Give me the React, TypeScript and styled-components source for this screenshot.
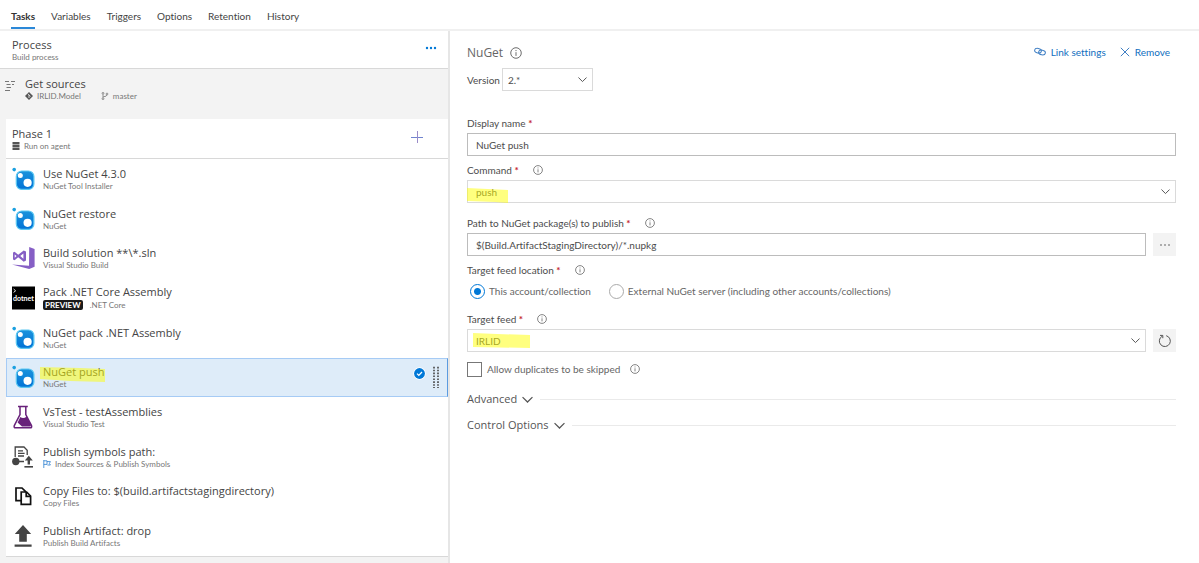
import React from "react";
import styled, { createGlobalStyle, css } from "styled-components";

const headingFont = `"Open Sans", "Noto Sans", sans-serif`;

const GlobalStyle = createGlobalStyle`
  *, *::before, *::after { box-sizing: border-box; }
  body {
    margin: 0;
    background: #fff;
    color: #4c4c4c;
    font-family: Lato, "Open Sans", sans-serif;
    font-size: 10px;
    line-height: 14px;
    font-variant-ligatures: none;
  }
  button, input, select { font: inherit; color: inherit; font-variant-ligatures: none; }
  button { border: 0; padding: 0; background: none; cursor: pointer; }
  svg { display: block; flex: none; }
`;

const Page = styled.div`
  min-height: 100vh;
  display: flex;
  flex-direction: column;
`;

const TabBar = styled.nav`
  display: flex;
  gap: 16px;
  padding: 0 11px;
  height: 31px;
  border-bottom: 2px solid #f0f0f0;
`;

const Tab = styled.a<{ $active?: boolean }>`
  display: flex;
  align-items: center;
  padding-top: 4px;
  color: #444;
  text-decoration: none;
  border-bottom: 2px solid transparent;
  ${(p) => p.$active && css`
    font-weight: 700;
    color: #333;
    border-bottom-color: #2b88d8;
  `}
`;

const Columns = styled.div`
  flex: 1;
  display: flex;
`;

const Pipeline = styled.aside`
  flex: 0 0 450px;
  display: flex;
  flex-direction: column;
  background: #f3f3f3;
  border-right: 2px solid #e6e6e6;
  padding-bottom: 6px;
`;

const ProcessHeader = styled.header`
  display: flex;
  justify-content: space-between;
  align-items: flex-start;
  height: 38px;
  padding: 6px 11px 0 12px;
  background: #fff;
  border-bottom: 1px solid #d8d8d8;
`;

const MoreButton = styled.button`
  padding: 9px 0;
`;

const Sources = styled.section`
  display: flex;
  gap: 10px;
  height: 50px;
  padding: 7px 4px 0;
  color: #666;
`;

const PhaseHeader = styled.header`
  display: flex;
  justify-content: space-between;
  align-items: flex-start;
  height: 40px;
  margin-left: 6px;
  padding: 7px 25px 0 6px;
  background: #fff;
  border-bottom: 1px solid #d8d8d8;
`;

const AddButton = styled.button`
  padding: 5px 0;
`;

const Title = styled.div`
  font-family: ${headingFont};
  font-size: 11px;
  line-height: 16px;
  color: #444;
  white-space: nowrap;
`;

const Subtitle = styled.div`
  display: flex;
  align-items: center;
  gap: 4px;
  font-size: 8px;
  line-height: 8px;
  color: #777;
  white-space: nowrap;
`;

const SourceMeta = styled(Subtitle)`
  gap: 20px;
`;

const TaskList = styled.ul`
  flex: 1;
  display: grid;
  grid-auto-rows: 1fr;
  margin: 0 0 0 6px;
  padding: 0;
  list-style: none;
  background: #fff;
  border-bottom: 1px solid #d8d8d8;
`;

const TaskRow = styled.button<{ $selected?: boolean }>`
  display: flex;
  align-items: center;
  gap: 7px;
  width: 100%;
  height: 100%;
  padding: 0 8px 0 5px;
  text-align: left;
  border: 1px solid transparent;
  ${(p) => p.$selected && css`
    background: #deecf9;
    border-color: #a6cbf5;
    border-right-color: #5b9be0;
  `}
`;

const TaskText = styled.span`
  flex: 1;
  display: block;
  padding-bottom: 2px;
`;

const Badge = styled.span`
  padding: 1px 2px;
  margin-right: 3px;
  border-radius: 2px;
  background: #1b1b1b;
  color: #fff;
  font-weight: 700;
`;

const Marked = styled.span`
  position: relative;
`;

const Marker = styled.svg`
  position: absolute;
  pointer-events: none;
  fill: rgba(255, 255, 0, 0.5);
`;

const TaskMarker = styled(Marker)`
  left: -3px;
  top: 3px;
`;

const FieldMarker = styled(Marker)`
  left: 0;
  top: 3px;
`;

const Details = styled.main`
  flex: 1;
  min-width: 0;
  padding: 13px 23px 0 17px;
`;

const DetailsHeader = styled.header`
  display: flex;
  justify-content: space-between;
  align-items: center;
  height: 18px;
`;

const Heading = styled.h1`
  display: flex;
  align-items: center;
  gap: 7px;
  margin: 0;
  font-family: ${headingFont};
  font-size: 12px;
  line-height: 18px;
  font-weight: 400;
  color: #666;
`;

const Actions = styled.div`
  display: flex;
  gap: 14px;
  padding: 0 6px 3px 0;
`;

const Action = styled.button`
  display: flex;
  align-items: center;
  gap: 5px;
  color: #106ebe;
`;

const VersionRow = styled.div`
  display: flex;
  align-items: center;
  gap: 2px;
  margin: 6px 0 24px;
`;

const VersionBox = styled.div`
  width: 91px;
`;

const Field = styled.div<{ $after: number }>`
  margin-bottom: ${(p) => p.$after}px;
`;

const LabelRow = styled.div`
  display: flex;
  align-items: center;
  gap: 14px;
  height: 16px;
  margin-bottom: 2px;
`;

const Required = styled.span`
  color: #c4262e;
  font-weight: 700;
`;

const ControlRow = styled.div`
  display: flex;
  gap: 7px;
`;

const TextInput = styled.input`
  flex: 1;
  min-width: 0;
  height: 23px;
  padding: 0 8px;
  border: 1px solid #bcbcbc;
  background: #fff;
`;

const SelectWrap = styled.div`
  position: relative;
  flex: 1;
  display: grid;
  align-items: center;
`;

const SelectBox = styled.select`
  width: 100%;
  height: 23px;
  padding: 0 24px 0 5px;
  border: 1px solid #dadada;
  border-radius: 0;
  background: #fff;
  appearance: none;
`;

const WideSelect = styled(SelectBox)`
  padding-left: 8px;
`;

const SelectArrow = styled.span`
  position: absolute;
  right: 6px;
  pointer-events: none;
`;

const SquareButton = styled.button`
  display: grid;
  place-items: center;
  width: 23px;
  height: 23px;
  background: #f3f3f3;
`;

const RadioRow = styled.div`
  display: flex;
  gap: 18px;
  height: 22px;
  padding-left: 3px;
`;

const Choice = styled.label`
  display: flex;
  align-items: center;
  gap: 4px;
  color: #666;
`;

const Radio = styled.input`
  appearance: none;
  width: 15px;
  height: 15px;
  margin: 0;
  border: 1px solid #aaa;
  border-radius: 50%;
  &:checked {
    border-color: #0078d7;
    background: radial-gradient(circle, #0078d7 0 3px, #fff 4px);
  }
`;

const CheckRow = styled.div`
  display: flex;
  align-items: center;
  gap: 10px;
  height: 16px;
  margin-bottom: 13px;
`;

const Check = styled.input`
  appearance: none;
  width: 15px;
  height: 15px;
  margin: 0 1px 0 0;
  border: 1px solid #777;
`;

const SectionToggle = styled.button`
  display: flex;
  align-items: center;
  gap: 5px;
  width: 100%;
  height: 18px;
  margin-bottom: 8px;
  font-family: ${headingFont};
  font-size: 11px;
  line-height: 18px;
  color: #555;
  &::after {
    content: "";
    flex: 1;
    height: 1px;
    margin-left: 2px;
    background: #eaeaea;
  }
`;

const InfoIcon = ({ size = 10 }: { size?: number }) => (
  <svg width={size} height={size} viewBox="0 0 10 10" fill="none" stroke="#666" strokeWidth="0.8">
    <circle cx="5" cy="5" r="4.4" />
    <path d="M5 4.3V7.4M5 2.5V3.4" />
  </svg>
);

const Chevron = ({ size = 9 }: { size?: number }) => (
  <svg width={size} height={size} viewBox="0 0 10 10" fill="none" stroke="#555" strokeWidth="1.1">
    <path d="M.5 2.8 5 7.3 9.5 2.8" />
  </svg>
);

const NuGetIcon = () => (
  <svg width="24" height="24" viewBox="0 0 24 24">
    <defs>
      <linearGradient id="nuget" x1="0" y1="0" x2="0" y2="1">
        <stop offset="0" stopColor="#1b93dc" />
        <stop offset="1" stopColor="#0072d6" />
      </linearGradient>
    </defs>
    <circle cx="2.2" cy="2.6" r="1.8" fill="#1ba0e0" />
    <rect x="4.3" y="4" width="17.6" height="18.4" rx="5.4" fill="url(#nuget)" stroke="#5cc8f2" strokeWidth="1.2" />
    <circle cx="8.3" cy="8.6" r="2.5" fill="#fff" />
    <circle cx="15.6" cy="15.8" r="4.1" fill="#fff" />
  </svg>
);

const VisualStudioIcon = () => (
  <svg width="24" height="24" viewBox="0 0 24 24" fill="#865fc5">
    <path d="M17.2 1 22.6 3V20.8L17.2 23 0 18.6 17 19.8Z" />
    <path fillRule="evenodd" d="M1 6.5 2.6 5.8 6.2 8.8 11.7 4.4 14 5.4V14.6L11.7 15.8 6.2 11.3 2.6 14.2 1 13.5ZM2.7 8.4V11.8L4.6 10ZM11.4 7.4 8.2 10 11.4 12.7Z" />
  </svg>
);

const DotnetIcon = () => (
  <svg width="24" height="24" viewBox="0 0 24 24">
    <rect width="23" height="23" y=".5" fill="#000" />
    <path d="M1.6 3 3.6 4.8 1.6 6.4" fill="none" stroke="#fff" strokeWidth=".9" />
    <text x="1" y="14.6" fontSize="7" fontWeight="700" fill="#fff">dotnet</text>
  </svg>
);

const FlaskIcon = () => (
  <svg width="24" height="24" viewBox="0 0 24 24">
    <path d="M6 1.6H15.8M8 2V9.6L2.3 20.6Q1.6 22.8 3.6 22.8H18.2Q20.2 22.8 19.5 20.6L13.8 9.6V2" fill="#fff" stroke="#68217a" strokeWidth="1.5" />
    <path d="M5.6 17.5 8.4 12Q11 14.4 14.8 11.6L18.6 19Q19.6 21.6 17.4 21.6H10Z" fill="#68217a" />
  </svg>
);

const SymbolsIcon = () => (
  <svg width="24" height="24" viewBox="0 0 24 24" fill="none" stroke="#444" strokeWidth="1.3">
    <path d="M3.2 12V2H12L15.2 5.2V10M6 5.8H11M6 8.4H12.6M6 11H12M7 16.5H12" />
    <circle cx="3.8" cy="16.5" r="3.7" fill="#444" stroke="none" />
    <path d="M16.8 10.8 20.8 15.4H18V19.6H15.6V15.4H12.8Z" fill="#444" stroke="none" />
    <path d="M12.4 21.8H21" strokeWidth="1.6" />
  </svg>
);

const CopyIcon = () => (
  <svg width="24" height="24" viewBox="0 0 24 24" fill="#fff" stroke="#111" strokeWidth="1.7">
    <path d="M4 4H10L13.4 7.4V16.6H4Z" />
    <path d="M9.2 8H14.6L18.6 12V20.4H9.2Z" />
    <path d="M14.2 8V12.4H18.6" fill="none" />
  </svg>
);

const ArtifactIcon = () => (
  <svg width="24" height="24" viewBox="0 0 24 24" fill="#444">
    <path d="M11 1 19.2 10H14.8V17.8H7.2V10H2.8ZM2.6 20.6H19.6V22.8H2.6Z" />
  </svg>
);

const FlagIcon = () => (
  <svg width="8" height="8" viewBox="0 0 8 8" fill="none" stroke="#2b7fd0" strokeWidth=".8">
    <path d="M.8 0V8M.8.8H4V4.4H.8M4 1.6H7.4L6.4 3.4 7.4 5H4.4" />
  </svg>
);

const SourceIcon = () => (
  <svg width="11" height="20" viewBox="0 0 11 20" stroke="#777" strokeWidth="1">
    <path d="M1 5.5H5M7 5.5H11M2.5 8.5H6.5M8 8.5H10M2.5 11.5H7M1 14.5H6" />
  </svg>
);

const GitIcon = () => (
  <svg width="8" height="8" viewBox="0 0 8 8">
    <path d="M4 0 8 4 4 8 0 4Z" fill="#555" />
    <path d="M2.8 1.8 5.6 4.4M4 3V6" stroke="#f3f3f3" strokeWidth=".8" />
  </svg>
);

const BranchIcon = () => (
  <svg width="8" height="8" viewBox="0 0 8 8" fill="none" stroke="#777" strokeWidth=".8">
    <circle cx="2" cy="1.3" r=".9" />
    <circle cx="2" cy="6.7" r=".9" />
    <circle cx="6" cy="2" r=".9" />
    <path d="M2 2.2V5.8M6 3Q6 4.4 2.2 4.8" />
  </svg>
);

const AgentIcon = () => (
  <svg width="8" height="8" viewBox="0 0 8 8">
    <path d="M.5 0H7.5V2H.5ZM.5 3H7.5V5H.5ZM.5 6H7.5V8H.5Z" fill="#555" />
    <path d="M.5 2.5H7.5M.5 5.5H7.5" stroke="#aaa" />
  </svg>
);

const Dots = ({ color, r = 1 }: { color: string; r?: number }) => (
  <svg width="12" height="4" viewBox="0 0 12 4" fill={color}>
    <circle cx="2" cy="2" r={r} />
    <circle cx="6" cy="2" r={r} />
    <circle cx="10" cy="2" r={r} />
  </svg>
);

const PlusIcon = () => (
  <svg width="12" height="12" viewBox="0 0 12 12" strokeWidth="1">
    <path d="M0 6.5H12" stroke="#6f84cf" />
    <path d="M6.5 0V12" stroke="#9a8cc8" />
  </svg>
);

const CheckedIcon = () => (
  <svg width="13" height="20" viewBox="0 0 13 20">
    <circle cx="6.5" cy="6.5" r="6.2" fill="#fff" />
    <circle cx="6.5" cy="6.5" r="5.4" fill="#0078d7" />
    <path d="M4 6.6 5.8 8.4 9 5" fill="none" stroke="#fff" strokeWidth="1.3" />
  </svg>
);

const GripIcon = () => (
  <svg width="6" height="22" viewBox="0 0 6 22" fill="none" stroke="#444" strokeWidth="1.6" strokeDasharray="1.6 1.3">
    <path d="M1 .8V22M5 .8V22" />
  </svg>
);

const LinkIcon = () => (
  <svg width="12" height="10" viewBox="0 0 12 10" fill="none" stroke="#3f7fc4" strokeWidth="1">
    <ellipse cx="4" cy="3.7" rx="3.4" ry="2.3" transform="rotate(10 4 3.7)" />
    <ellipse cx="8" cy="5.5" rx="3.4" ry="2.3" transform="rotate(10 8 5.5)" />
  </svg>
);

const RemoveIcon = () => (
  <svg width="10" height="10" viewBox="0 0 10 10" stroke="#3f7fc4" strokeWidth="1">
    <path d="M.8.8 9.2 9.2M9.2.8.8 9.2" />
  </svg>
);

const RefreshIcon = () => (
  <svg width="14" height="14" viewBox="0 0 14 14" fill="none" stroke="#555" strokeWidth="1">
    <path d="M8.2 1.7A5.5 5.5 0 1 1 4.2 2.2M2 1.4H4.8V4.2" />
  </svg>
);

const tabs = ["Tasks", "Variables", "Triggers", "Options", "Retention", "History"];

type Task = {
  title: string;
  kind: string;
  icon: React.ReactNode;
  badge?: string;
  flag?: boolean;
  selected?: boolean;
};

const tasks: Task[] = [
  { title: "Use NuGet 4.3.0", kind: "NuGet Tool Installer", icon: <NuGetIcon /> },
  { title: "NuGet restore", kind: "NuGet", icon: <NuGetIcon /> },
  { title: "Build solution **\\*.sln", kind: "Visual Studio Build", icon: <VisualStudioIcon /> },
  { title: "Pack .NET Core Assembly", kind: ".NET Core", icon: <DotnetIcon />, badge: "PREVIEW" },
  { title: "NuGet pack .NET Assembly", kind: "NuGet", icon: <NuGetIcon /> },
  { title: "NuGet push", kind: "NuGet", icon: <NuGetIcon />, selected: true },
  { title: "VsTest - testAssemblies", kind: "Visual Studio Test", icon: <FlaskIcon /> },
  { title: "Publish symbols path:", kind: "Index Sources & Publish Symbols", icon: <SymbolsIcon />, flag: true },
  { title: "Copy Files to: $(build.artifactstagingdirectory)", kind: "Copy Files", icon: <CopyIcon /> },
  { title: "Publish Artifact: drop", kind: "Publish Build Artifacts", icon: <ArtifactIcon /> },
];

const FieldLabel = ({ id, text, info = true }: { id: string; text: string; info?: boolean }) => (
  <LabelRow>
    <label htmlFor={id}>
      {text} <Required>*</Required>
    </label>
    {info && <InfoIcon />}
  </LabelRow>
);

export default function App() {
  return (
    <Page>
      <GlobalStyle />
      <TabBar>
        {tabs.map((t, i) => (
          <Tab key={t} href="#" $active={i === 0}>{t}</Tab>
        ))}
      </TabBar>
      <Columns>
        <Pipeline>
          <ProcessHeader>
            <div>
              <Title>Process</Title>
              <Subtitle>Build process</Subtitle>
            </div>
            <MoreButton aria-label="More"><Dots color="#0078d7" r={1.2} /></MoreButton>
          </ProcessHeader>
          <Sources>
            <SourceIcon />
            <div>
              <Title>Get sources</Title>
              <SourceMeta>
                <Subtitle><GitIcon />IRLID.Model</Subtitle>
                <Subtitle><BranchIcon />master</Subtitle>
              </SourceMeta>
            </div>
          </Sources>
          <PhaseHeader>
            <div>
              <Title>Phase 1</Title>
              <Subtitle><AgentIcon />Run on agent</Subtitle>
            </div>
            <AddButton aria-label="Add task"><PlusIcon /></AddButton>
          </PhaseHeader>
          <TaskList>
            {tasks.map((t) => (
              <li key={t.title}>
                <TaskRow $selected={t.selected}>
                  {t.icon}
                  <TaskText>
                    <Title>
                      {t.selected ? (
                        <Marked>
                          {t.title}
                          <TaskMarker width="66" height="16" viewBox="0 0 66 16">
                            <path d="M0 0 40 1 65 2V15L30 14 0 12Z" />
                          </TaskMarker>
                        </Marked>
                      ) : t.title}
                    </Title>
                    <Subtitle>
                      {t.badge && <Badge>{t.badge}</Badge>}
                      {t.flag && <FlagIcon />}
                      {t.kind}
                    </Subtitle>
                  </TaskText>
                  {t.selected && <><CheckedIcon /><GripIcon /></>}
                </TaskRow>
              </li>
            ))}
          </TaskList>
        </Pipeline>
        <Details>
          <DetailsHeader>
            <Heading>NuGet <InfoIcon size={12} /></Heading>
            <Actions>
              <Action><LinkIcon />Link settings</Action>
              <Action><RemoveIcon />Remove</Action>
            </Actions>
          </DetailsHeader>
          <VersionRow>
            <label htmlFor="version">Version</label>
            <VersionBox>
              <SelectWrap>
                <SelectBox id="version"><option>2.*</option></SelectBox>
                <SelectArrow><Chevron /></SelectArrow>
              </SelectWrap>
            </VersionBox>
          </VersionRow>
          <Field $after={6}>
            <FieldLabel id="name" text="Display name" info={false} />
            <ControlRow><TextInput id="name" defaultValue="NuGet push" /></ControlRow>
          </Field>
          <Field $after={12}>
            <FieldLabel id="command" text="Command" />
            <SelectWrap>
              <WideSelect id="command"><option>push</option></WideSelect>
              <FieldMarker width="42" height="20" viewBox="0 0 42 20">
                <path d="M0 5 41 7V20L28 19 0 18Z" />
              </FieldMarker>
              <SelectArrow><Chevron /></SelectArrow>
            </SelectWrap>
          </Field>
          <Field $after={6}>
            <FieldLabel id="path" text="Path to NuGet package(s) to publish" />
            <ControlRow>
              <TextInput id="path" defaultValue="$(Build.ArtifactStagingDirectory)/*.nupkg" />
              <SquareButton aria-label="Browse"><Dots color="#555" r={0.8} /></SquareButton>
            </ControlRow>
          </Field>
          <Field $after={9} role="radiogroup" aria-labelledby="location">
            <LabelRow>
              <span id="location">Target feed location <Required>*</Required></span>
              <InfoIcon />
            </LabelRow>
            <RadioRow>
              <Choice><Radio type="radio" name="feed" defaultChecked />This account/collection</Choice>
              <Choice><Radio type="radio" name="feed" />External NuGet server (including other accounts/collections)</Choice>
            </RadioRow>
          </Field>
          <Field $after={9}>
            <FieldLabel id="feed" text="Target feed" />
            <ControlRow>
              <SelectWrap>
                <WideSelect id="feed"><option>IRLID</option></WideSelect>
                <FieldMarker width="64" height="20" viewBox="0 0 64 20">
                  <path d="M6 1 30 2 63 3V16L6 15Z" />
                </FieldMarker>
                <SelectArrow><Chevron /></SelectArrow>
              </SelectWrap>
              <SquareButton aria-label="Refresh"><RefreshIcon /></SquareButton>
            </ControlRow>
          </Field>
          <CheckRow>
            <Choice><Check type="checkbox" />Allow duplicates to be skipped</Choice>
            <InfoIcon />
          </CheckRow>
          <SectionToggle aria-expanded="false">Advanced <Chevron size={11} /></SectionToggle>
          <SectionToggle aria-expanded="false">Control Options <Chevron size={11} /></SectionToggle>
        </Details>
      </Columns>
    </Page>
  );
}
